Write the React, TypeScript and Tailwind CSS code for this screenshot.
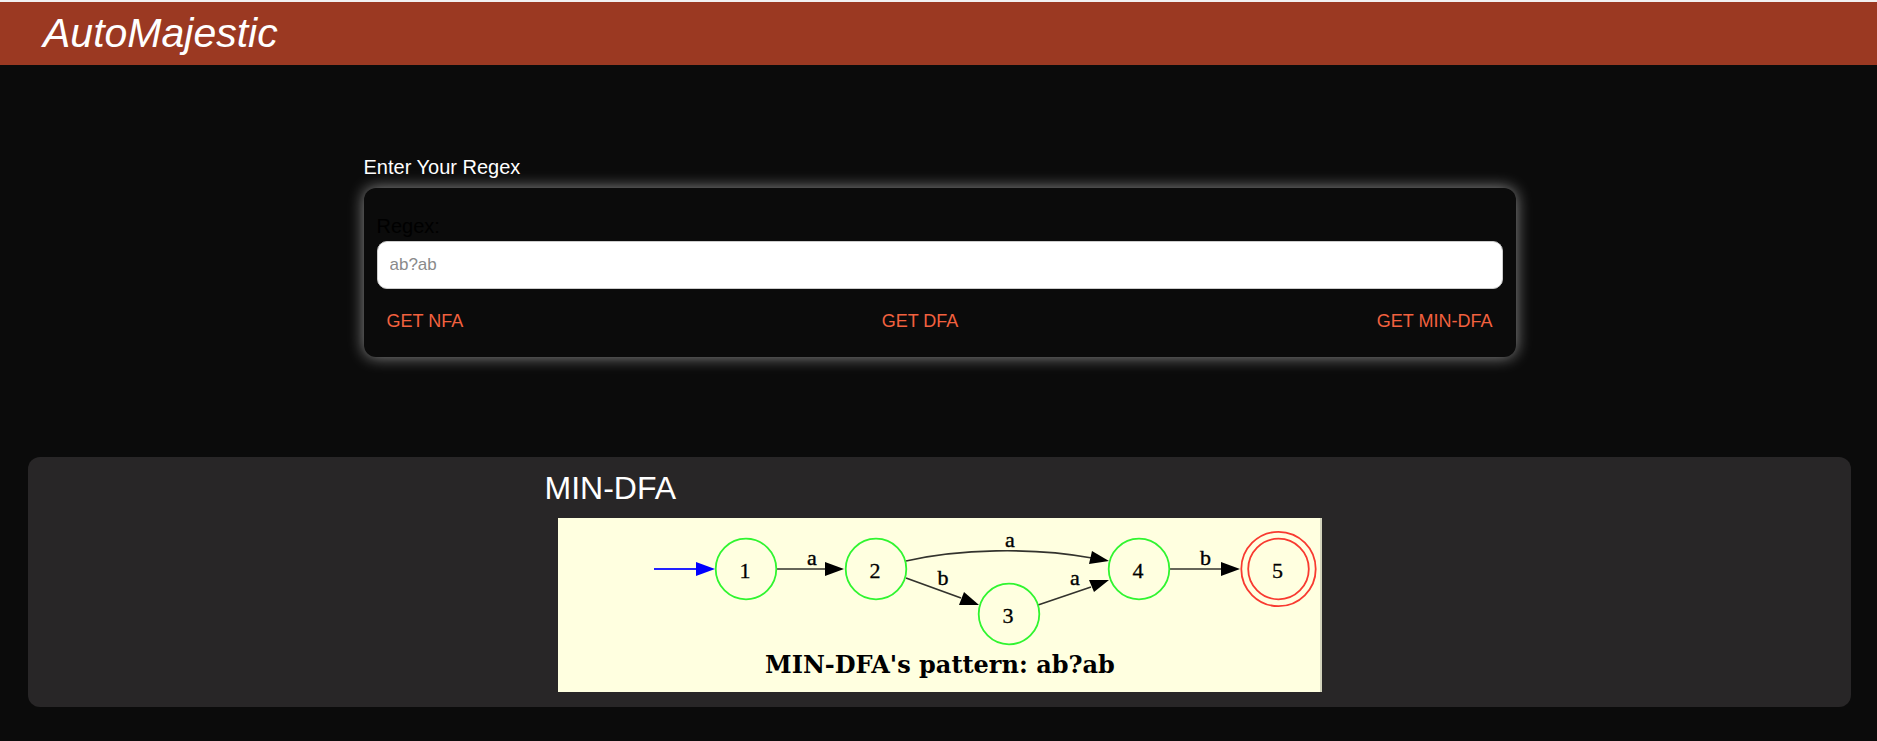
import { useState } from "react";

type State = { id: number; x: number; y: number; accepting?: boolean };
type Label = { text: string; x: number; y: number };

const states: State[] = [
  { id: 1, x: 188, y: 51 },
  { id: 2, x: 318, y: 51 },
  { id: 3, x: 451, y: 96 },
  { id: 4, x: 581, y: 51 },
  { id: 5, x: 720.5, y: 51, accepting: true },
];

const edges = [
  "M219 51H268",
  "M348 43C400 31 474 29 534 40",
  "M348 60L403 80",
  "M480 87L533 69",
  "M612 51H664",
];

const arrowHeads = [
  "267,44 286,51 267,58",
  "534,33 551,43 531,46",
  "406,74 421,87 401,87",
  "531,62 551,62 536,74",
  "663,44 682,51 663,58",
];

const labels: Label[] = [
  { text: "a", x: 254, y: 47 },
  { text: "a", x: 452, y: 28.5 },
  { text: "b", x: 385, y: 67 },
  { text: "a", x: 517, y: 67 },
  { text: "b", x: 647.5, y: 47 },
];

function AutomatonDiagram({ pattern }: { pattern: string }) {
  return (
    <svg
      viewBox="0 0 764 174"
      role="img"
      aria-label="MIN-DFA diagram"
      className="block w-full bg-[#ffffe0]"
    >
      <path d="M96 51H138" stroke="#2222ff" strokeWidth="2" />
      <polygon points="138,44 157,51 138,58" fill="#0000ff" />
      {edges.map((d) => (
        <path key={d} d={d} fill="none" stroke="#33332d" strokeWidth="1.7" />
      ))}
      {arrowHeads.map((points) => (
        <polygon key={points} points={points} fill="#000" />
      ))}
      {states.map((s) => (
        <g key={s.id}>
          <circle cx={s.x} cy={s.y} r="30.3" fill="none" stroke={s.accepting ? "#f83a30" : "#30f530"} strokeWidth="1.8" />
          {s.accepting && <circle cx={s.x} cy={s.y} r="37.2" fill="none" stroke="#f83a30" strokeWidth="1.8" />}
          <text
            x={s.x - 1}
            y={s.y + 9}
            textAnchor="middle"
            stroke="#000"
            strokeWidth="0.3"
            className="font-['Liberation_Serif',serif] text-[22px]"
          >
            {s.id}
          </text>
        </g>
      ))}
      {labels.map((l) => (
        <text
          key={`${l.x}-${l.y}`}
          x={l.x}
          y={l.y}
          textAnchor="middle"
          stroke="#000"
          strokeWidth="0.4"
          className="font-['Liberation_Serif',serif] text-[22px]"
        >
          {l.text}
        </text>
      ))}
      <text x="382" y="155" textAnchor="middle" className="font-['DejaVu_Serif',serif] text-[24px] font-bold">
        {`MIN-DFA's pattern: ${pattern}`}
      </text>
      <path d="M763 0V174" stroke="#d4d4bc" strokeWidth="2" />
    </svg>
  );
}

const actions = ["GET NFA", "GET DFA", "GET MIN-DFA"];

export default function App() {
  const [regex, setRegex] = useState("");

  return (
    <div className="min-h-screen border-t-2 border-[#f1f1f1] bg-[#0b0b0b] font-['Liberation_Sans',Arial,sans-serif] text-white">
      <header className="bg-[#9b3922] py-1 pr-6 pl-[43px]">
        <h1 className="text-[41px] leading-[55px] italic">AutoMajestic</h1>
      </header>

      <main className="pr-[26px] pb-8 pl-7">
        <section className="mx-auto max-w-6xl pt-[88px]">
          <h2 className="mb-[7px] text-xl leading-7">Enter Your Regex</h2>
          <form
            onSubmit={(e) => e.preventDefault()}
            className="rounded-xl px-[13px] pt-6 pb-3.5 shadow-[0_0_16px_rgba(255,255,255,0.55)]"
          >
            <label htmlFor="regex" className="mb-px block text-xl leading-7 text-black">
              Regex:
            </label>
            <input
              id="regex"
              type="text"
              value={regex}
              onChange={(e) => setRegex(e.target.value)}
              placeholder="ab?ab"
              className="block h-12 w-full rounded-[10px] border border-[#cccccc] bg-white px-3 text-[17px] text-black placeholder:text-[#8a8a8a]"
            />
            <div className="mt-2.5 flex justify-between">
              {actions.map((action) => (
                <button key={action} type="submit" className="px-2.5 py-2 text-lg leading-7 text-[#f2613f]">
                  {action}
                </button>
              ))}
            </div>
          </form>
        </section>

        <section className="mt-[100px] rounded-xl bg-[#282627] pt-[11px] pb-[15px]">
          <div className="mx-auto max-w-[790px]">
            <h2 className="text-[32px] leading-10">MIN-DFA</h2>
            <div className="px-[13px] pt-2.5">
              <AutomatonDiagram pattern="ab?ab" />
            </div>
          </div>
        </section>
      </main>
    </div>
  );
}
